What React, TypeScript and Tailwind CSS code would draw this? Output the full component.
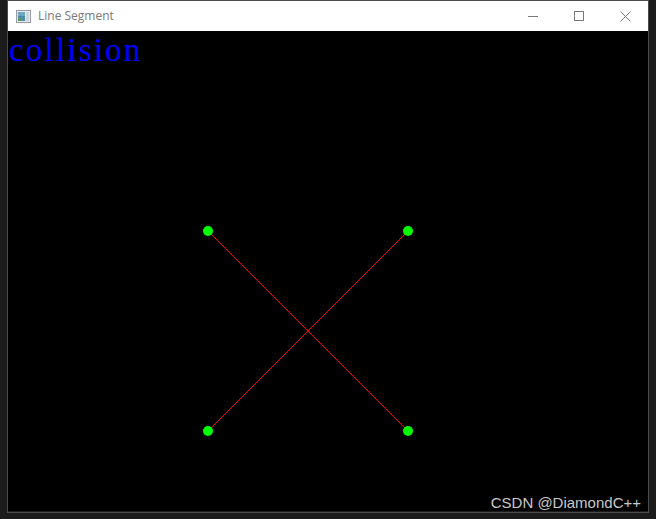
import React from "react";

const points = [
	[200, 200],
	[400, 200],
	[200, 400],
	[400, 400],
];

function AppIcon() {
	return (
		<svg width="15" height="13" viewBox="0 0 15 13">
			<rect x="0.5" y="0.5" width="14" height="12" fill="#e8e8ee" stroke="#9a9aa4" />
			<rect x="2" y="2" width="7" height="9" fill="#4f8aa8" />
			<rect x="2" y="2" width="7" height="4" fill="#6fa8c0" />
			<rect x="2" y="8" width="4" height="3" fill="#5a9a6a" />
			<rect x="10" y="2" width="3" height="9" fill="#c9d6dc" />
		</svg>
	);
}

export default function App() {
	return (
		<div className="relative w-[656px] h-[519px] bg-[#1c1c1c] overflow-hidden">
			<div className="ml-[7px] w-[642px] h-[513px] border border-[#4b4b4b] flex flex-col">
				<div className="h-[30px] bg-white flex items-center">
					<div className="pl-[8px] pr-[7px] flex items-center">
						<AppIcon />
					</div>
					<span className="text-[12px] text-[#7a7a7a] font-['Open_Sans','Noto_Sans',sans-serif] leading-none">
						Line Segment
					</span>
					<div className="ml-auto flex items-center h-full">
						<div className="w-[46px] h-full flex items-center justify-center">
							<div className="w-[10px] h-px bg-[#7a7a7a]" />
						</div>
						<div className="w-[46px] h-full flex items-center justify-center">
							<div className="w-[10px] h-[10px] border border-[#7a7a7a]" />
						</div>
						<div className="w-[46px] h-full flex items-center justify-center">
							<svg width="11" height="11" viewBox="0 0 11 11">
								<path d="M0.5 0.5 L10.5 10.5 M10.5 0.5 L0.5 10.5" stroke="#7a7a7a" strokeWidth="1" />
							</svg>
						</div>
					</div>
				</div>
				<div className="relative w-[640px] h-[480px] bg-black">
					<p className="absolute left-[1px] top-[3px] text-[33px] leading-none tracking-[2.2px] text-[#0000ff] font-['Liberation_Serif','DejaVu_Serif',serif]">
						collision
					</p>
					<svg width="640" height="480" viewBox="0 0 640 480" className="block" shapeRendering="crispEdges">
						<line x1="200" y1="200" x2="400" y2="400" stroke="#ff0000" strokeWidth="1" />
						<line x1="400" y1="200" x2="200" y2="400" stroke="#ff0000" strokeWidth="1" />
						{points.map(([x, y]) => (
							<circle key={`${x}-${y}`} cx={x} cy={y} r="5" fill="#00ff00" shapeRendering="auto" />
						))}
					</svg>
				</div>
			</div>
			<span className="absolute right-[15px] bottom-[9px] text-[15px] leading-none text-[#c8c8c8] font-['Liberation_Sans','Noto_Sans',sans-serif]">
				CSDN @DiamondC++
			</span>
		</div>
	);
}
